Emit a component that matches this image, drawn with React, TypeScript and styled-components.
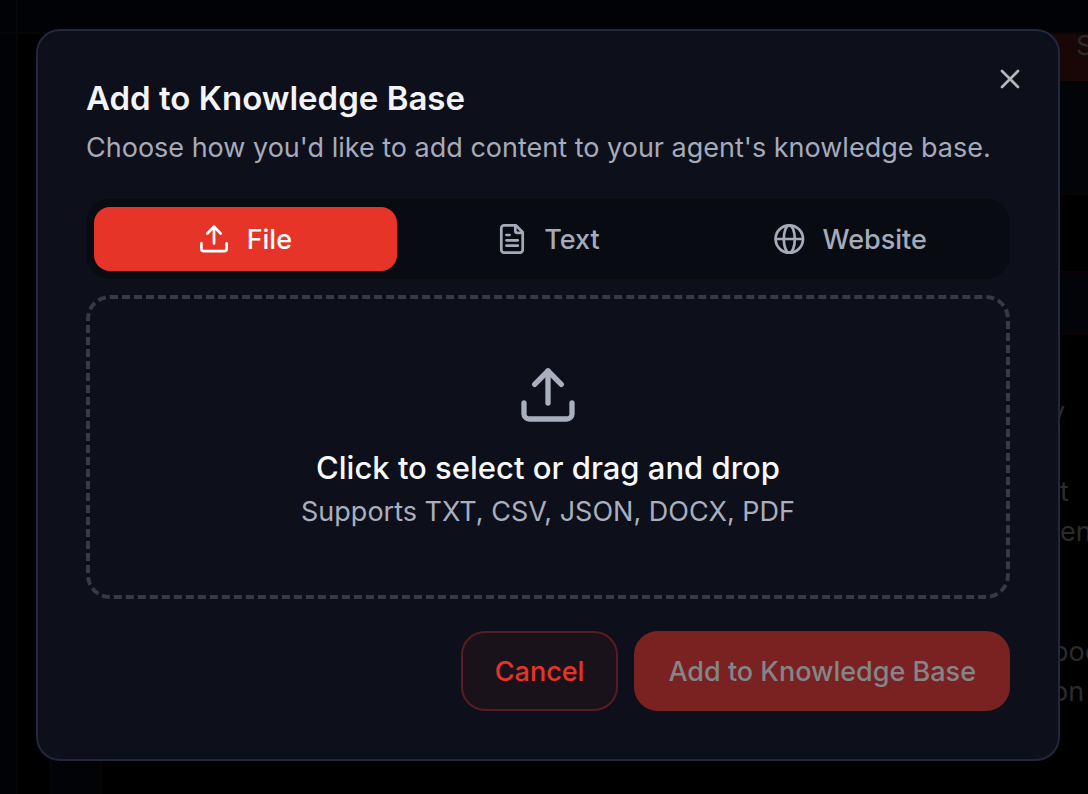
import React from "react";
import styled, { createGlobalStyle, css } from "styled-components";
import { Upload, X } from "lucide-react";

const GlobalStyle = createGlobalStyle`
  *, *::before, *::after { box-sizing: border-box; }
  html, body { margin: 0; min-height: 100%; background: #000; }
  body {
    font-family: Inter, "Liberation Sans", sans-serif;
    overflow: hidden;
  }
  button { font: inherit; margin: 0; cursor: pointer; }
  h2, p { margin: 0; }
`;

const Page = styled.div`
  display: flex;
  min-height: 100vh;
  background: #000001;
`;

const Sidebar = styled.aside`
  width: 18px;
  flex: none;
  background: #010206;
  border-right: 2px solid #060608;
`;

const Content = styled.main`
  flex: 1;
  min-width: 0;
  display: flex;
  flex-direction: column;
`;

const TopBar = styled.header`
  height: 34px;
  background: #010205;
  border-bottom: 2px solid #060607;
`;

const PageBody = styled.div`
  flex: 1;
  display: flex;
  justify-content: space-between;
`;

const TableEdge = styled.div`
  width: 52px;
  margin-left: 32px;
  background: #020306;
  border-left: 2px solid #060607;
  border-right: 2px solid #0b0203;
`;

const Aside = styled.section`
  width: 40px;
  display: flex;
  flex-direction: column;
  color: #2b2b2c;
  font-size: 27px;
  line-height: 40px;
  white-space: nowrap;
  overflow: hidden;
`;

const SaveButton = styled.button`
  height: 47px;
  padding: 0 0 24px 28px;
  border: 0;
  background: #190607;
  color: #2a2a2b;
  text-align: left;
  line-height: 24px;
`;

const Band = styled.div<{ $height: number; $tint?: boolean }>`
  flex: none;
  height: ${({ $height }) => $height}px;
  background: ${({ $tint }) => ($tint ? "#030408" : "#000001")};
  border-bottom: 2px solid #0b0303;
`;

const Notes = styled.div`
  display: flex;
  flex-direction: column;
  padding-top: 57px;
`;

const Note = styled.p<{ $indent: number; $gap?: number }>`
  margin-top: ${({ $gap = 0 }) => $gap}px;
  padding-left: ${({ $indent }) => $indent}px;
`;

const Overlay = styled.div`
  position: fixed;
  inset: 0;
  padding: 29px 28px 29px 36px;
`;

const Dialog = styled.div`
  position: relative;
  padding: 48px;
  border: 2px solid #22273b;
  border-radius: 24px;
  background: #0d0f1a;
`;

const CloseButton = styled.button`
  position: absolute;
  top: 32px;
  right: 32px;
  width: 32px;
  height: 32px;
  padding: 0;
  border: 0;
  background: transparent;
  color: #b5b6ba;
  svg { display: block; }
`;

const Title = styled.h2`
  font-size: 33px;
  line-height: 38px;
  font-weight: 600;
  color: #f3f4f8;
`;

const Description = styled.p`
  margin-top: 10px;
  font-size: 27px;
  line-height: 42px;
  color: #a5abbb;
`;

const TabList = styled.div`
  display: grid;
  grid-template-columns: repeat(3, 1fr);
  margin-top: 30px;
  padding: 8px;
  border-radius: 24px;
  background: #090b12;
`;

const Tab = styled.button<{ $active?: boolean }>`
  display: flex;
  align-items: center;
  justify-content: center;
  gap: 16px;
  height: 64px;
  padding: 0 24px;
  border: 0;
  border-radius: 16px;
  background: ${({ $active }) => ($active ? "#e63428" : "transparent")};
  color: ${({ $active }) => ($active ? "#ffffff" : "#a5abbb")};
  font-size: 27px;
  font-weight: 500;
  line-height: 40px;
`;

const TabLabel = styled.span`
  padding-top: 2px;
`;

const DropZone = styled.button`
  display: flex;
  flex-direction: column;
  align-items: center;
  width: 100%;
  margin-top: 16px;
  padding: 64px;
  border: 4px dashed #363946;
  border-radius: 24px;
  background: transparent;
  color: #a9afbf;
`;

const DropTitle = styled.span`
  margin-top: 16px;
  font-size: 31px;
  line-height: 50px;
  font-weight: 500;
  color: #f8f9fc;
`;

const DropHint = styled.span`
  font-size: 27px;
  line-height: 38px;
`;

const Footer = styled.div`
  display: flex;
  justify-content: flex-end;
  gap: 16px;
  margin-top: 32px;
`;

const ActionButton = styled.button<{ $primary?: boolean }>`
  height: 80px;
  padding: 2px 32px 0;
  border: 2px solid;
  border-radius: 24px;
  font-size: 27px;
  line-height: 40px;
  font-weight: 500;
  ${({ $primary }) =>
    $primary
      ? css`
          border-color: #7a2222;
          background: #7a2222;
          color: #848589;
        `
      : css`
          border-color: #591d21;
          background: #19121b;
          color: #e63428;
        `}
`;

const TabIcon = ({ children }: { children: React.ReactNode }) => (
  <svg
    width="32"
    height="32"
    viewBox="0 0 32 32"
    fill="none"
    stroke="currentColor"
    strokeWidth="2.7"
    strokeLinecap="round"
    strokeLinejoin="round"
    aria-hidden="true"
  >
    {children}
  </svg>
);

export default function App() {
  return (
    <>
      <GlobalStyle />
      <Page>
        <Sidebar>
          <TopBar />
        </Sidebar>
        <Content>
          <TopBar />
          <PageBody>
            <TableEdge />
            <Aside>
              <SaveButton>S</SaveButton>
              <Band $height={114} $tint />
              <Band $height={78} />
              <Band $height={62} $tint />
              <Notes>
                <Note $indent={2}>y</Note>
                <Note $indent={12} $gap={40}>
                  t<br />
                  en
                </Note>
                <Note $indent={4} $gap={80}>
                  poc
                  <br />
                  on
                </Note>
              </Notes>
            </Aside>
          </PageBody>
        </Content>
      </Page>
      <Overlay>
        <Dialog role="dialog" aria-modal="true" aria-labelledby="dialog-title">
          <CloseButton aria-label="Close">
            <X size={32} strokeWidth={2} />
          </CloseButton>
          <Title id="dialog-title">Add to Knowledge Base</Title>
          <Description>Choose how you'd like to add content to your agent's knowledge base.</Description>
          <TabList role="tablist">
            <Tab role="tab" aria-selected="true" $active>
              <TabIcon>
                <path d="M15 20.5V3.8" />
                <path d="m8.3 10.5 6.7-6.7 6.7 6.7" />
                <path d="M2.4 20.3v5.4a2.4 2.4 0 0 0 2.4 2.4h20.4a2.4 2.4 0 0 0 2.4-2.4v-5.4" />
              </TabIcon>
              <TabLabel>File</TabLabel>
            </Tab>
            <Tab role="tab" aria-selected="false">
              <TabIcon>
                <path d="M19.8 2.3H8a2.7 2.7 0 0 0-2.7 2.7v22A2.7 2.7 0 0 0 8 29.7h16a2.7 2.7 0 0 0 2.7-2.7V9.2z" />
                <path d="M19.3 2.6v5.5a1.8 1.8 0 0 0 1.8 1.8h5.3" />
                <path d="M10.5 12h3.1M10.5 17.3h11.3M10.5 22.7h11.3" />
              </TabIcon>
              <TabLabel>Text</TabLabel>
            </Tab>
            <Tab role="tab" aria-selected="false">
              <TabIcon>
                <circle cx="15.3" cy="16" r="13.7" />
                <ellipse cx="15.3" cy="16" rx="5.5" ry="13.7" />
                <path d="M2 16h26.6" />
              </TabIcon>
              <TabLabel>Website</TabLabel>
            </Tab>
          </TabList>
          <DropZone>
            <Upload size={64} strokeWidth={2} />
            <DropTitle>Click to select or drag and drop</DropTitle>
            <DropHint>Supports TXT, CSV, JSON, DOCX, PDF</DropHint>
          </DropZone>
          <Footer>
            <ActionButton>Cancel</ActionButton>
            <ActionButton $primary disabled>
              Add to Knowledge Base
            </ActionButton>
          </Footer>
        </Dialog>
      </Overlay>
    </>
  );
}
